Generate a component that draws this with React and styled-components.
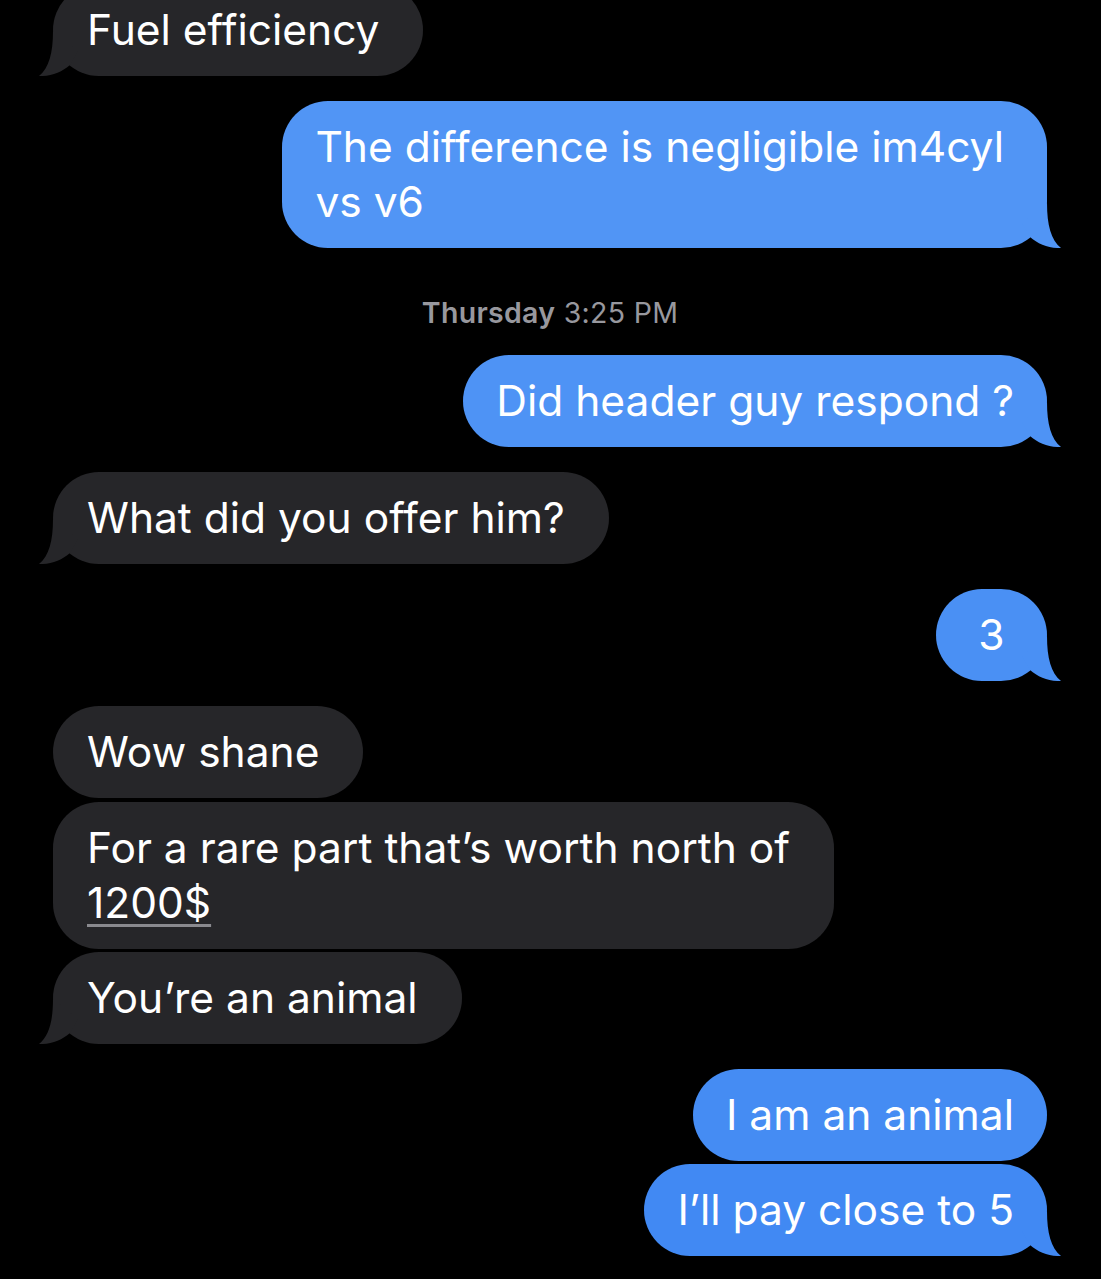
import styled, { createGlobalStyle } from 'styled-components';

const GlobalStyle = createGlobalStyle`
  html, body {
    margin: 0;
    padding: 0;
    background: #000;
  }
  body {
    font-family: Inter, "Noto Sans", "Liberation Sans", sans-serif;
    -webkit-font-smoothing: antialiased;
  }
`;

const Screen = styled.div`
  width: 1101px;
  height: 1279px;
  overflow: hidden;
  background: #000;
`;

const Thread = styled.div`
  display: flex;
  flex-direction: column;
  margin-top: -16px;
  padding: 0 54px 0 53px;
`;

const Row = styled.div`
  display: flex;
  justify-content: ${({ $mine }) => ($mine ? 'flex-end' : 'flex-start')};
  margin-top: ${({ $gap }) => $gap}px;
`;

const Bubble = styled.div`
  position: relative;
  box-sizing: border-box;
  min-width: 111px;
  text-align: center;
  background: ${({ $mine, $tone }) => ($mine ? $tone : '#262629')};
  color: #fff;
  font-size: 42.5px;
  letter-spacing: 0;
  line-height: 55px;
  padding: 18px ${({ $mine, $extra }) => ($mine ? 33 + $extra : 44)}px 19px
    ${({ $mine }) => ($mine ? 33 : 34)}px;
  border-radius: 46px;
  white-space: nowrap;
`;

const Lines = styled.div`
  text-align: left;
  display: inline-block;
`;

const Tail = styled.svg`
  position: absolute;
  bottom: 0;
  width: 42px;
  height: 45px;
  ${({ $mine }) =>
    $mine
      ? 'right: -15px; transform: scaleX(-1);'
      : 'left: -15px;'}
`;

const Underlined = styled.span`
  text-decoration: underline;
  text-decoration-color: #8a8a8f;
  text-decoration-thickness: 3px;
  text-underline-offset: 6px;
`;

const Stamp = styled.div`
  margin: 48px 0 25px;
  text-align: center;
  color: #98989e;
  font-size: 28.5px;
  line-height: 34px;
  letter-spacing: 0.3px;

  b {
    font-weight: 600;
  }
`;

const messages = [
  { mine: false, lines: ['Fuel efficiency'], tail: true, gap: 0 },
  { mine: true, lines: ['The difference is negligible im4cyl', 'vs v6'], tail: true, gap: 25, tone: '#5195f5', extra: 10 },
  { stamp: true },
  { mine: true, lines: ['Did header guy respond ?'], tail: true, gap: 0, tone: '#4e93f5' },
  { mine: false, lines: ['What did you offer him?'], tail: true, gap: 25 },
  { mine: true, lines: ['3'], tail: true, gap: 25, tone: '#4a90f4' },
  { mine: false, lines: ['Wow shane'], tail: false, gap: 25 },
  { mine: false, lines: ['For a rare part that’s worth north of', <Underlined key="u">1200$</Underlined>], tail: false, gap: 4 },
  { mine: false, lines: ['You’re an animal'], tail: true, gap: 3 },
  { mine: true, lines: ['I am an animal'], tail: false, gap: 25, tone: '#458cf3' },
  { mine: true, lines: ['I’ll pay close to 5'], tail: true, gap: 3, tone: '#4189f3' },
];

function BubbleTail({ mine, color }) {
  return (
    <Tail $mine={mine} viewBox="0 0 42 45">
      <path d="M15 0 C15 22 11 37 1 45 C13 45.5 24 41 32 34 L40 20 L15 0 Z" fill={color} />
    </Tail>
  );
}

export default function App() {
  return (
    <Screen>
      <GlobalStyle />
      <Thread>
        {messages.map((m, i) => {
          if (m.stamp) {
            return (
              <Stamp key={i}>
                <b>Thursday</b> 3:25 PM
              </Stamp>
            );
          }
          const color = m.mine ? m.tone : '#262629';
          return (
            <Row key={i} $mine={m.mine} $gap={m.gap}>
              <Bubble $mine={m.mine} $tone={m.tone} $extra={m.extra || 0}>
                <Lines>
                  {m.lines.map((l, j) => (
                    <span key={j}>
                      {j > 0 && <br />}
                      {l}
                    </span>
                  ))}
                </Lines>
                {m.tail && <BubbleTail mine={m.mine} color={color} />}
              </Bubble>
            </Row>
          );
        })}
      </Thread>
    </Screen>
  );
}
